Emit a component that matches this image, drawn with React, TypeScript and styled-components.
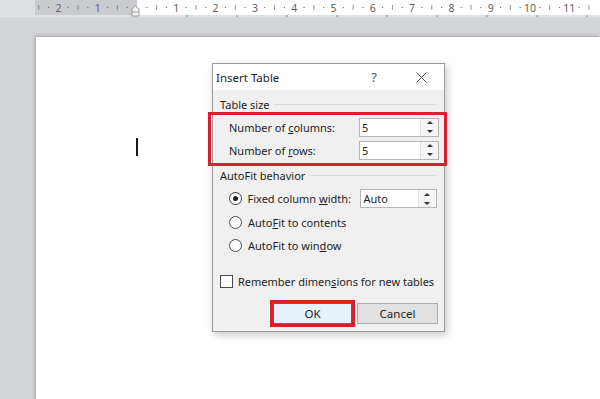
import React from 'react';
import styled, { createGlobalStyle } from 'styled-components';

const GlobalStyle = createGlobalStyle`
  html, body {
    margin: 0;
    padding: 0;
    background: #d2d4d8;
  }
`;

const Screen = styled.div`
  position: relative;
  width: 600px;
  height: 399px;
  overflow: hidden;
  background: #d2d4d8;
  font-family: "Segoe UI", "Noto Sans", "Liberation Sans", sans-serif;
`;

const RulerBar = styled.div`
  height: 17px;
  background: #dfe0e2;
`;

const Workspace = styled.div`
  padding: 20px 0 0 36px;
`;

const Page = styled.div`
  height: 380px;
  background: #ffffff;
  box-shadow: -1px -1px 0 #b4b6ba, -2px -2px 3px rgba(0, 0, 0, 0.12);
  padding: 101px 0 0 100px;
`;

const Caret = styled.div`
  width: 2px;
  height: 18px;
  background: #1a1a1a;
`;

const Dialog = styled.div`
  position: absolute;
  left: 212px;
  top: 63px;
  width: 233px;
  height: 269px;
  box-sizing: border-box;
  border: 1px solid #9a9a9a;
  background: #f0f0f0;
  box-shadow: 2px 3px 8px rgba(0, 0, 0, 0.22);
  display: flex;
  flex-direction: column;
  font-size: 11px;
  color: #1e1e1e;
  white-space: nowrap;
`;

const TitleBar = styled.div`
  height: 26px;
  background: #ffffff;
  display: flex;
  align-items: center;
  padding-left: 3px;
`;

const Title = styled.div`
  flex: 1;
  font-size: 11.5px;
`;

const TitleButton = styled.div<{ $w: number }>`
  width: ${(p) => p.$w}px;
  text-align: center;
  font-size: 13px;
  color: #555;
`;

const Body = styled.div`
  display: flex;
  flex-direction: column;
  padding: 6px 7px 0 7px;
`;

const GroupHeader = styled.div<{ $mt?: number }>`
  display: flex;
  align-items: center;
  height: 16px;
  gap: 4px;
  margin-top: ${(p) => p.$mt ?? 0}px;
  &::after {
    content: '';
    flex: 1;
    height: 1px;
    background: #dcdcdc;
  }
`;

const Highlight = styled.div`
  margin: 0 -10px 0 -12px;
  border: 3px solid #d7202e;
  padding: 3px 0 4px 0;
  display: flex;
  flex-direction: column;
  gap: 5px;
`;

const FieldRow = styled.div<{ $indent: number }>`
  display: flex;
  align-items: center;
  height: 18px;
  padding-left: ${(p) => p.$indent}px;
`;

const FieldLabel = styled.div<{ $w: number }>`
  width: ${(p) => p.$w}px;
`;

const SpinBox = styled.div`
  display: flex;
  height: 19px;
  width: 80px;
  box-sizing: border-box;
  border: 1px solid #b5b5b5;
  background: #ffffff;
`;

const SpinValue = styled.div`
  flex: 1;
  padding-left: 2px;
  line-height: 17px;
`;

const SpinArrows = styled.div`
  width: 17px;
  display: flex;
  flex-direction: column;
  border-left: 1px solid #e2e2e2;
  background: #f6f6f6;
`;

const Arrow = styled.div<{ $up?: boolean }>`
  flex: 1;
  display: flex;
  align-items: center;
  justify-content: center;
  &::before {
    content: '';
    border-left: 3px solid transparent;
    border-right: 3px solid transparent;
    ${(p) => (p.$up ? 'border-bottom: 3px solid #333;' : 'border-top: 3px solid #333;')}
  }
`;

const OptionList = styled.div`
  display: flex;
  flex-direction: column;
  padding: 6px 0 0 9px;
  gap: 4px;
`;

const Option = styled.div`
  display: flex;
  align-items: center;
  height: 19.5px;
  gap: 6px;
`;

const Radio = styled.div<{ $on?: boolean }>`
  width: 11px;
  height: 11px;
  border-radius: 50%;
  border: 1px solid #4a4a4a;
  background: #fff;
  display: flex;
  align-items: center;
  justify-content: center;
  &::after {
    content: '';
    width: 5px;
    height: 5px;
    border-radius: 50%;
    background: ${(p) => (p.$on ? '#222' : 'transparent')};
  }
`;

const CheckRow = styled.div`
  display: flex;
  align-items: center;
  gap: 5px;
  margin-top: 17px;
  height: 18px;
`;

const Checkbox = styled.div`
  width: 11px;
  height: 11px;
  border: 1px solid #4a4a4a;
  background: #fff;
`;

const ButtonRow = styled.div`
  display: flex;
  justify-content: flex-end;
  align-items: center;
  gap: 2px;
  margin-top: 9px;
  margin-right: -1px;
`;

const OkFrame = styled.div`
  border: 3px solid #d7202e;
`;

const Button = styled.div<{ $primary?: boolean }>`
  width: ${(p) => (p.$primary ? 79 : 81)}px;
  height: 21px;
  box-sizing: border-box;
  display: flex;
  align-items: center;
  justify-content: center;
  font-size: 11.5px;
  background: ${(p) => (p.$primary ? '#e5f1fb' : '#e1e1e1')};
  border: 1px solid ${(p) => (p.$primary ? '#0078d7' : '#adadad')};
`;

const rulerNumbers = [-2, -1, 1, 2, 3, 4, 5, 6, 7, 8, 9, 10, 11];

function Ruler() {
  const origin = 137;
  const step = 39.3;
  const marks: React.ReactNode[] = [];
  for (let n = -3; n <= 12; n++) {
    for (let q = 1; q < 4; q++) {
      const x = origin + (n + q / 4) * step;
      if (x < 37 || x > 598) continue;
      if (q === 2) {
        marks.push(<line key={`m${n}-${q}`} x1={x} x2={x} y1={5} y2={10} stroke="#7a7a7a" strokeWidth={0.8} />);
      } else {
        marks.push(<circle key={`m${n}-${q}`} cx={x} cy={7.5} r={0.7} fill="#7a7a7a" />);
      }
    }
  }
  const tabs: React.ReactNode[] = [];
  for (let t = 1; t <= 9; t++) {
    const x = origin + t * 50;
    tabs.push(<line key={`t${t}`} x1={x} x2={x} y1={15} y2={17} stroke="#8a8a8a" strokeWidth={1} />);
  }
  return (
    <svg width={600} height={17} style={{ display: 'block' }}>
      <rect x={35} y={0} width={102} height={15} fill="#c9cbcf" />
      <rect x={137} y={0} width={463} height={15} fill="#ffffff" />
      {marks}
      {rulerNumbers.map((n) => (
        <text
          key={n}
          x={origin + n * step}
          y={11.5}
          fontSize={10.5}
          fill="#606060"
          textAnchor="middle"
          fontFamily="Segoe UI, Noto Sans, sans-serif"
        >
          {Math.abs(n)}
        </text>
      ))}
      {tabs}
      <path d="M132 9 L135.5 6 L139 9 L139 16 L132 16 Z" fill="#f4f4f4" stroke="#8c8c8c" strokeWidth={0.8} />
      <line x1={132} x2={139} y1={12} y2={12} stroke="#8c8c8c" strokeWidth={0.8} />
    </svg>
  );
}

function Spinner({ value }: { value: string }) {
  return (
    <SpinBox>
      <SpinValue>{value}</SpinValue>
      <SpinArrows>
        <Arrow $up />
        <Arrow />
      </SpinArrows>
    </SpinBox>
  );
}

export default function App() {
  return (
    <>
      <GlobalStyle />
      <Screen>
        <RulerBar>
          <Ruler />
        </RulerBar>
        <Workspace>
          <Page>
            <Caret />
          </Page>
        </Workspace>
        <Dialog>
          <TitleBar>
            <Title>Insert Table</Title>
            <TitleButton $w={48}>?</TitleButton>
            <TitleButton $w={46}>
              <svg width={11} height={11} viewBox="0 0 11 11" style={{ display: 'block', margin: '0 auto' }}>
                <path d="M0.5 0.5 L10.5 10.5 M10.5 0.5 L0.5 10.5" stroke="#555" strokeWidth={1} />
              </svg>
            </TitleButton>
          </TitleBar>
          <Body>
            <GroupHeader>Table size</GroupHeader>
            <Highlight>
              <FieldRow $indent={18}>
                <FieldLabel $w={130}>
                  Number of <u>c</u>olumns:
                </FieldLabel>
                <Spinner value="5" />
              </FieldRow>
              <FieldRow $indent={18}>
                <FieldLabel $w={130}>
                  Number of <u>r</u>ows:
                </FieldLabel>
                <Spinner value="5" />
              </FieldRow>
            </Highlight>
            <GroupHeader $mt={1}>AutoFit behavior</GroupHeader>
            <OptionList>
              <Option>
                <Radio $on />
                <FieldLabel $w={112}>
                  Fixed column <u>w</u>idth:
                </FieldLabel>
                <Spinner value="Auto" />
              </Option>
              <Option>
                <Radio />
                <span>
                  Auto<u>F</u>it to contents
                </span>
              </Option>
              <Option>
                <Radio />
                <span>
                  AutoFit to win<u>d</u>ow
                </span>
              </Option>
            </OptionList>
            <CheckRow>
              <Checkbox />
              <span>
                Remember dimen<u>s</u>ions for new tables
              </span>
            </CheckRow>
            <ButtonRow>
              <OkFrame>
                <Button $primary>OK</Button>
              </OkFrame>
              <Button>Cancel</Button>
            </ButtonRow>
          </Body>
        </Dialog>
      </Screen>
    </>
  );
}
